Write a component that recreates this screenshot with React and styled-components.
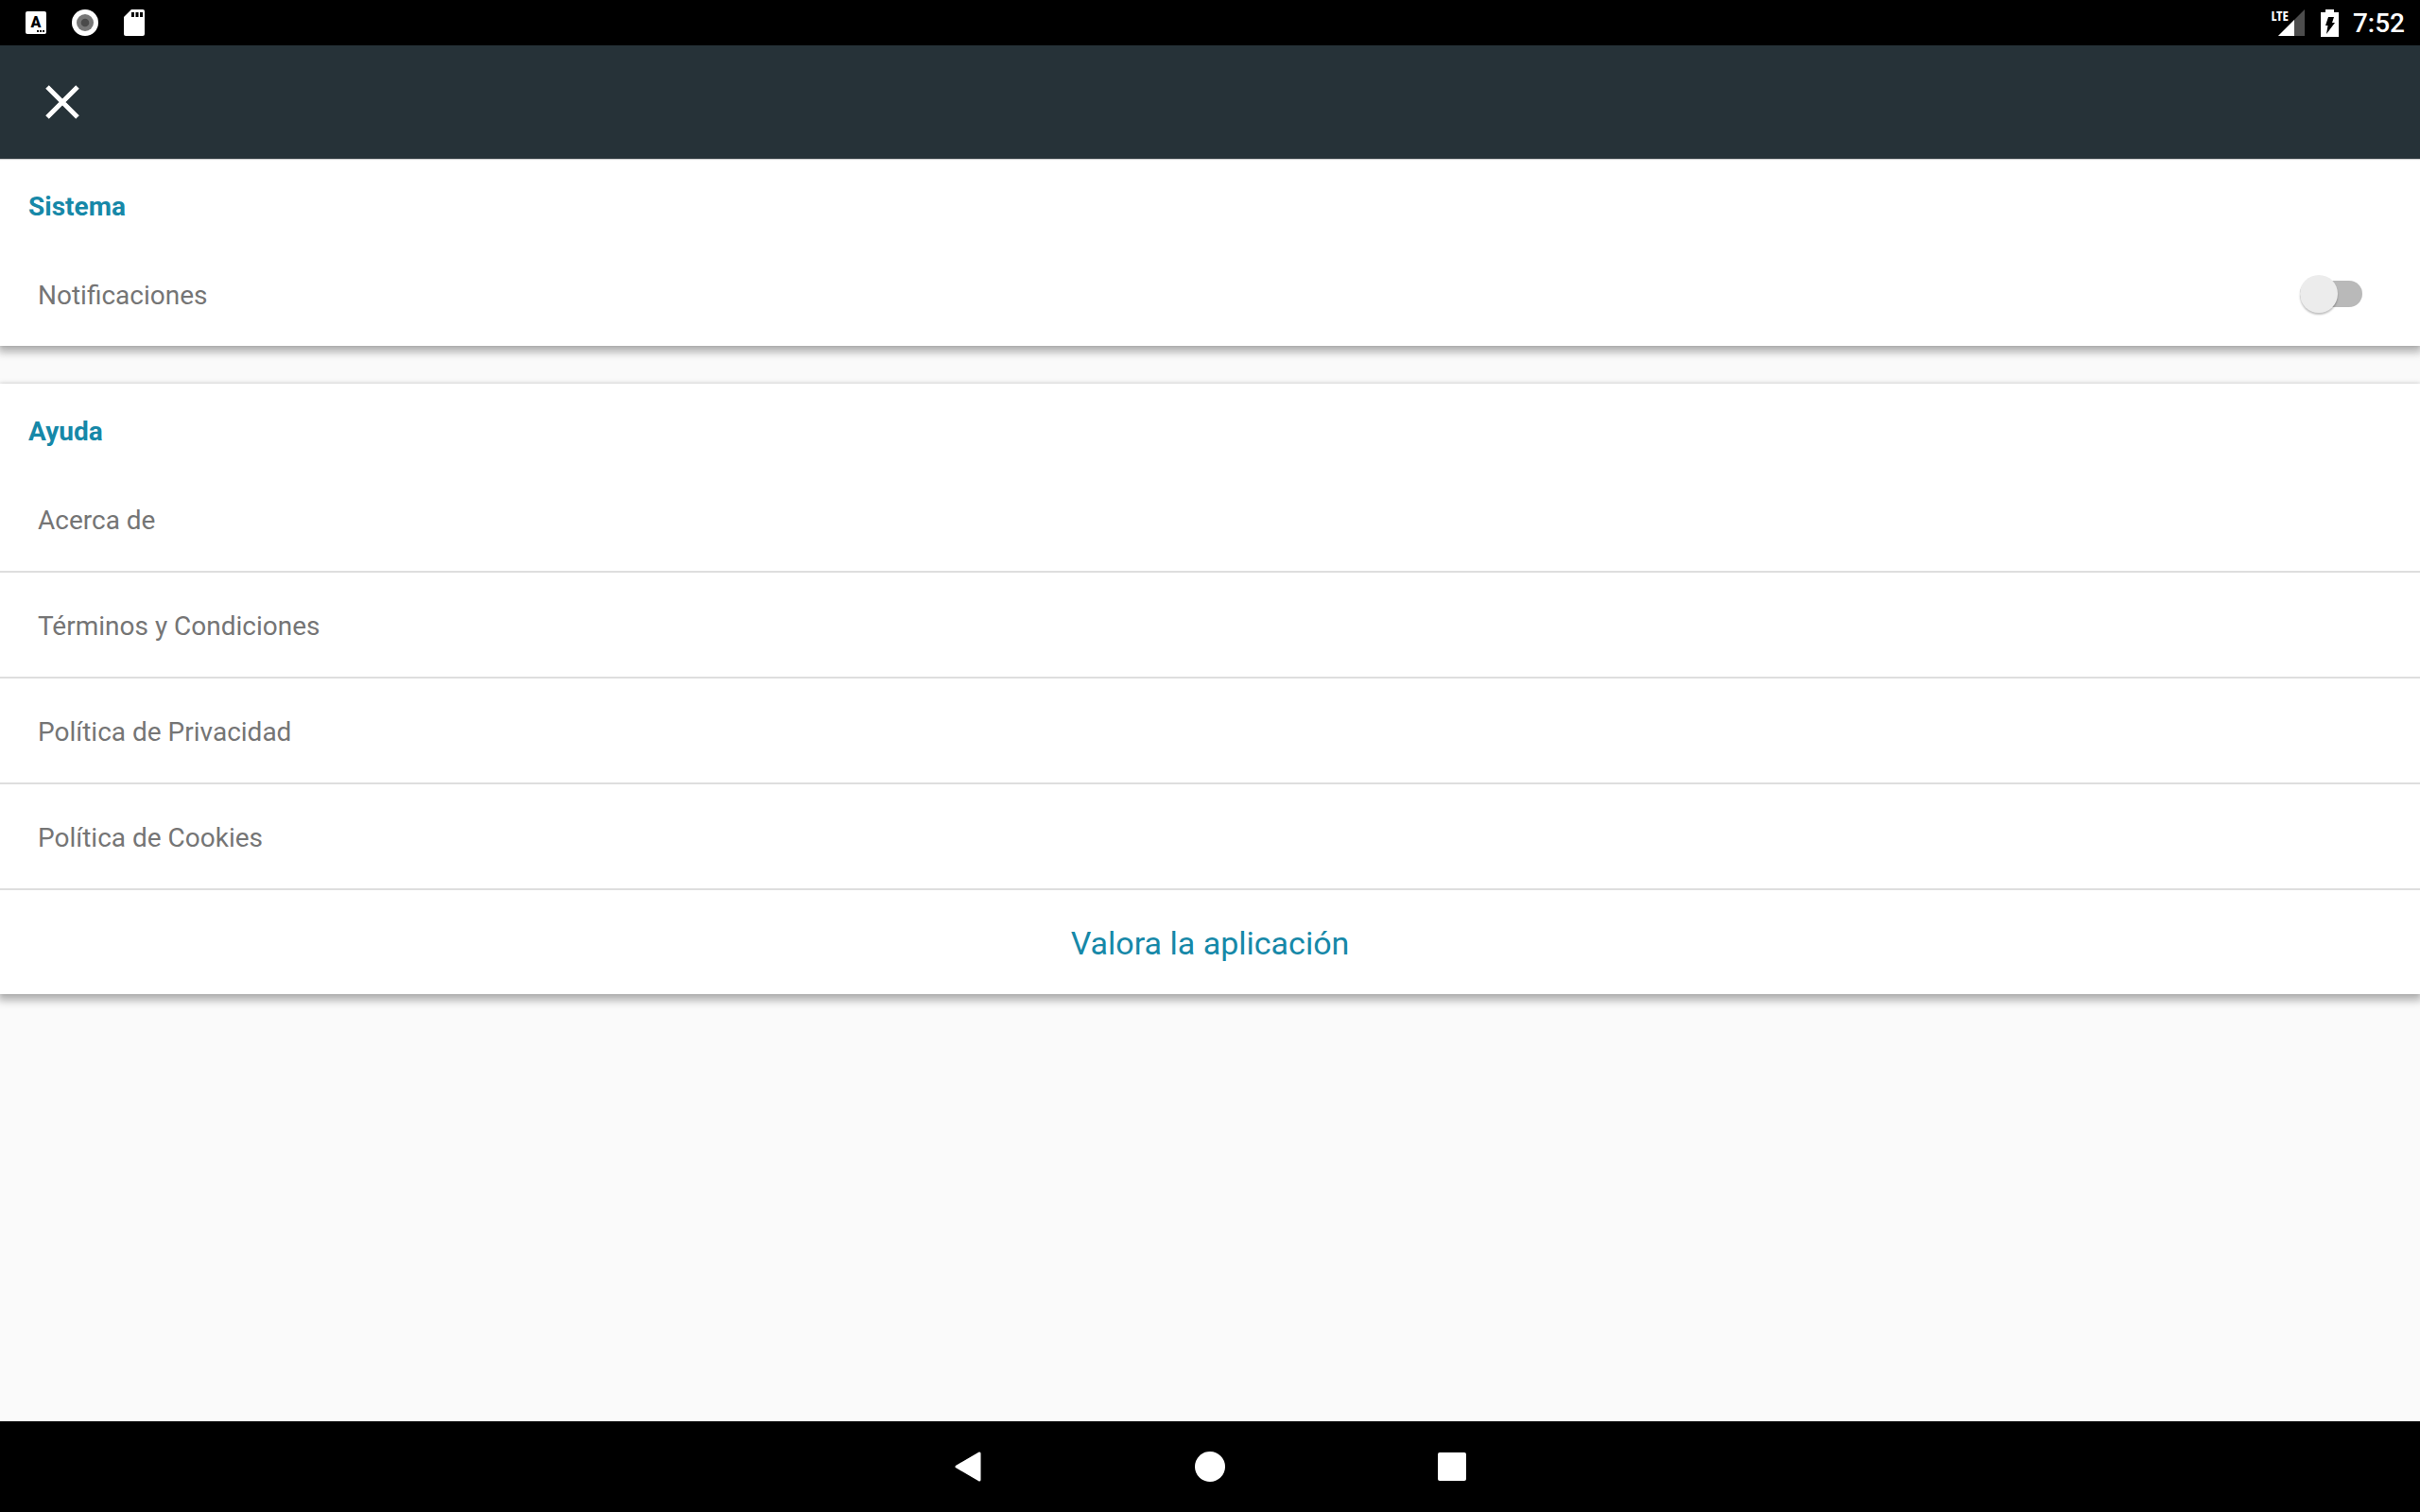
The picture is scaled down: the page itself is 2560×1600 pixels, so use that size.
import { useState } from "react";
import styled, { createGlobalStyle } from "styled-components";

const helpLinks = ["Acerca de", "Términos y Condiciones", "Política de Privacidad", "Política de Cookies"]

const App = () => {
    const [notifications, setNotifications] = useState(false)

    return (
        <Screen>
            <GlobalStyle />

            <StatusBar>
                <StatusGroup $gap={27}>
                    <KeyboardBadge>
                        A
                        <svg width="8" height="2" viewBox="0 0 8 2" aria-hidden="true">
                            <path d="M0 0h2v2H0zM3 0h2v2H3zM6 0h2v2H6z" fill="#000" />
                        </svg>
                    </KeyboardBadge>
                    <svg width="28" height="28" viewBox="0 0 28 28" aria-hidden="true">
                        <circle cx="14" cy="14" r="14" fill="#fff" />
                        <circle cx="14" cy="14" r="9" fill="#777" />
                        <circle cx="14" cy="14" r="4.3" fill="#4a4a4a" />
                    </svg>
                    <svg width="22" height="28" viewBox="1 0 22 28" aria-hidden="true">
                        <path d="M9 0h12a2 2 0 0 1 2 2v24a2 2 0 0 1-2 2H3a2 2 0 0 1-2-2V8z" fill="#fff" />
                        <path d="M9 3h3v5H9zM13.5 3h3v5h-3zM18 3h3v5h-3z" fill="#000" />
                    </svg>
                </StatusGroup>
                <StatusGroup $gap={15}>
                    <Signal>
                        <Network>LTE</Network>
                        <svg width="28" height="28" viewBox="0 0 28 28" aria-hidden="true">
                            <path d="M28 0v28H0z" fill="#4d4d4d" />
                            <path d="M17 11v17H0z" fill="#fff" />
                        </svg>
                    </Signal>
                    <svg width="19" height="29" viewBox="0 0 19 29" aria-hidden="true">
                        <path d="M5 0h9v3h5v26H0V3h5z" fill="#fff" />
                        <path d="M8 8h6l-2 6h3L6 26l1.500-9H5z" fill="#000" />
                    </svg>
                    <Clock>7:52</Clock>
                </StatusGroup>
            </StatusBar>

            <Toolbar>
                <CloseButton type="button" aria-label="Cerrar">
                    <svg width="36" height="36" viewBox="0 0 36 36" aria-hidden="true">
                        <path d="M2 2 34 34M34 2 2 34" stroke="#fff" strokeWidth="5" />
                    </svg>
                </CloseButton>
            </Toolbar>

            <Content>
                <Card>
                    <CardTitle>Sistema</CardTitle>
                    <SwitchRow>
                        <span>Notificaciones</span>
                        <Switch
                            type="checkbox"
                            role="switch"
                            checked={notifications}
                            onChange={(e) => setNotifications(e.target.checked)}
                        />
                    </SwitchRow>
                </Card>

                <Card>
                    <CardTitle>Ayuda</CardTitle>
                    {helpLinks.map((label) => {
                        return <RowLink href="#" key={label}>{label}</RowLink>
                    })}
                    <RateButton type="button">Valora la aplicación</RateButton>
                </Card>
            </Content>

            <NavBar>
                <NavButton type="button" aria-label="Atrás">
                    <svg width="32" height="32" viewBox="0 0 32 32" aria-hidden="true">
                        <path d="M4 16 28 2v28z" fill="#fff" stroke="#fff" strokeWidth="3" strokeLinejoin="round" />
                    </svg>
                </NavButton>
                <NavButton type="button" aria-label="Inicio">
                    <svg width="32" height="32" viewBox="0 0 32 32" aria-hidden="true">
                        <circle cx="16" cy="16" r="16" fill="#fff" />
                    </svg>
                </NavButton>
                <NavButton type="button" aria-label="Recientes">
                    <svg width="32" height="32" viewBox="0 0 32 32" aria-hidden="true">
                        <rect x="1" y="1" width="30" height="30" rx="2" fill="#fff" />
                    </svg>
                </NavButton>
            </NavBar>
        </Screen>
    )
}

export default App

const GlobalStyle = createGlobalStyle`
    * {
        box-sizing: border-box;
    }
    body {
        margin: 0;
        font-family: Roboto, sans-serif;
    }
    button {
        border: none;
        background: none;
        padding: 0;
        font-family: inherit;
        cursor: pointer;
    }
    svg {
        display: block;
    }
`

const Screen = styled.div`
    display: flex;
    flex-direction: column;
    min-height: 100vh;
    background-color: #fafafa;
`

const StatusBar = styled.header`
    display: flex;
    justify-content: space-between;
    align-items: center;
    height: 48px;
    padding: 0 16px 0 27px;
    background-color: #000;
    color: #fff;
`

const StatusGroup = styled.div`
    display: flex;
    align-items: center;
    gap: ${(props) => props.$gap}px;
`

const KeyboardBadge = styled.span`
    display: flex;
    flex-direction: column;
    align-items: center;
    width: 22px;
    height: 24px;
    padding: 4px 2px 0;
    border-radius: 2px;
    background-color: #fff;
    color: #000;
    font-size: 16px;
    font-weight: 900;
    line-height: 16px;
    svg {
        align-self: flex-end;
    }
`

const Signal = styled.div`
    display: flex;
    position: relative;
    padding-right: 2px;
`

const Network = styled.span`
    position: absolute;
    top: 0;
    right: 19px;
    font-family: "Open Sans Condensed", "Liberation Sans Narrow", sans-serif;
    font-size: 15px;
    font-weight: 700;
    line-height: 12px;
`

const Clock = styled.span`
    padding-top: 2px;
    font-size: 28px;
    font-weight: 500;
    line-height: 32px;
`

const Toolbar = styled.div`
    display: flex;
    position: relative;
    z-index: 1;
    align-items: center;
    height: 120px;
    padding: 0 36px;
    background-color: #263238;
    box-shadow: 0 1px 1px rgba(0, 0, 0, 0.2);
`

const CloseButton = styled.button`
    display: flex;
    align-items: center;
    justify-content: center;
    width: 60px;
    height: 60px;
`

const Content = styled.main`
    display: flex;
    flex-direction: column;
    flex: 1;
    gap: 40px;
`

const Card = styled.section`
    background-color: #fff;
    box-shadow: 0 5px 8px 2px rgba(0, 0, 0, 0.28), 0 0 4px rgba(0, 0, 0, 0.12);
`

const CardTitle = styled.h2`
    margin: 0;
    padding: 33px 30px 19px;
    color: #1688a8;
    font-size: 28px;
    font-weight: 700;
    line-height: 36px;
`

const SwitchRow = styled.label`
    display: flex;
    align-items: center;
    justify-content: space-between;
    height: 110px;
    padding: 0 61px 0 40px;
    color: #757575;
    font-size: 28px;
    line-height: 32px;
    span {
        padding-top: 4px;
    }
`

const Switch = styled.input`
    appearance: none;
    display: flex;
    align-items: center;
    width: 66px;
    height: 28px;
    margin: 0;
    border-radius: 14px;
    background-color: ${(props) => (props.checked ? "#8bc3d3" : "#b9b9b9")};
    cursor: pointer;
    &::before {
        content: "";
        width: 40px;
        height: 40px;
        border-radius: 50%;
        background-color: ${(props) => (props.checked ? "#1688a8" : "#ececec")};
        box-shadow: 0 2px 2px rgba(0, 0, 0, 0.24);
        transform: translateX(${(props) => (props.checked ? 26 : 0)}px);
    }
`

const RowLink = styled.a`
    display: flex;
    align-items: center;
    height: 112px;
    padding: 4px 40px 0;
    border-bottom: 2px solid #dedede;
    color: #757575;
    font-size: 28px;
    line-height: 32px;
    text-decoration: none;
`

const RateButton = styled.button`
    display: block;
    width: 100%;
    height: 110px;
    padding-top: 2px;
    color: #1688a8;
    font-size: 34px;
`

const NavBar = styled.nav`
    display: flex;
    justify-content: center;
    align-items: center;
    gap: 96px;
    height: 96px;
    background-color: #000;
`

const NavButton = styled.button`
    display: flex;
    align-items: center;
    justify-content: center;
    width: 160px;
    height: 96px;
`
